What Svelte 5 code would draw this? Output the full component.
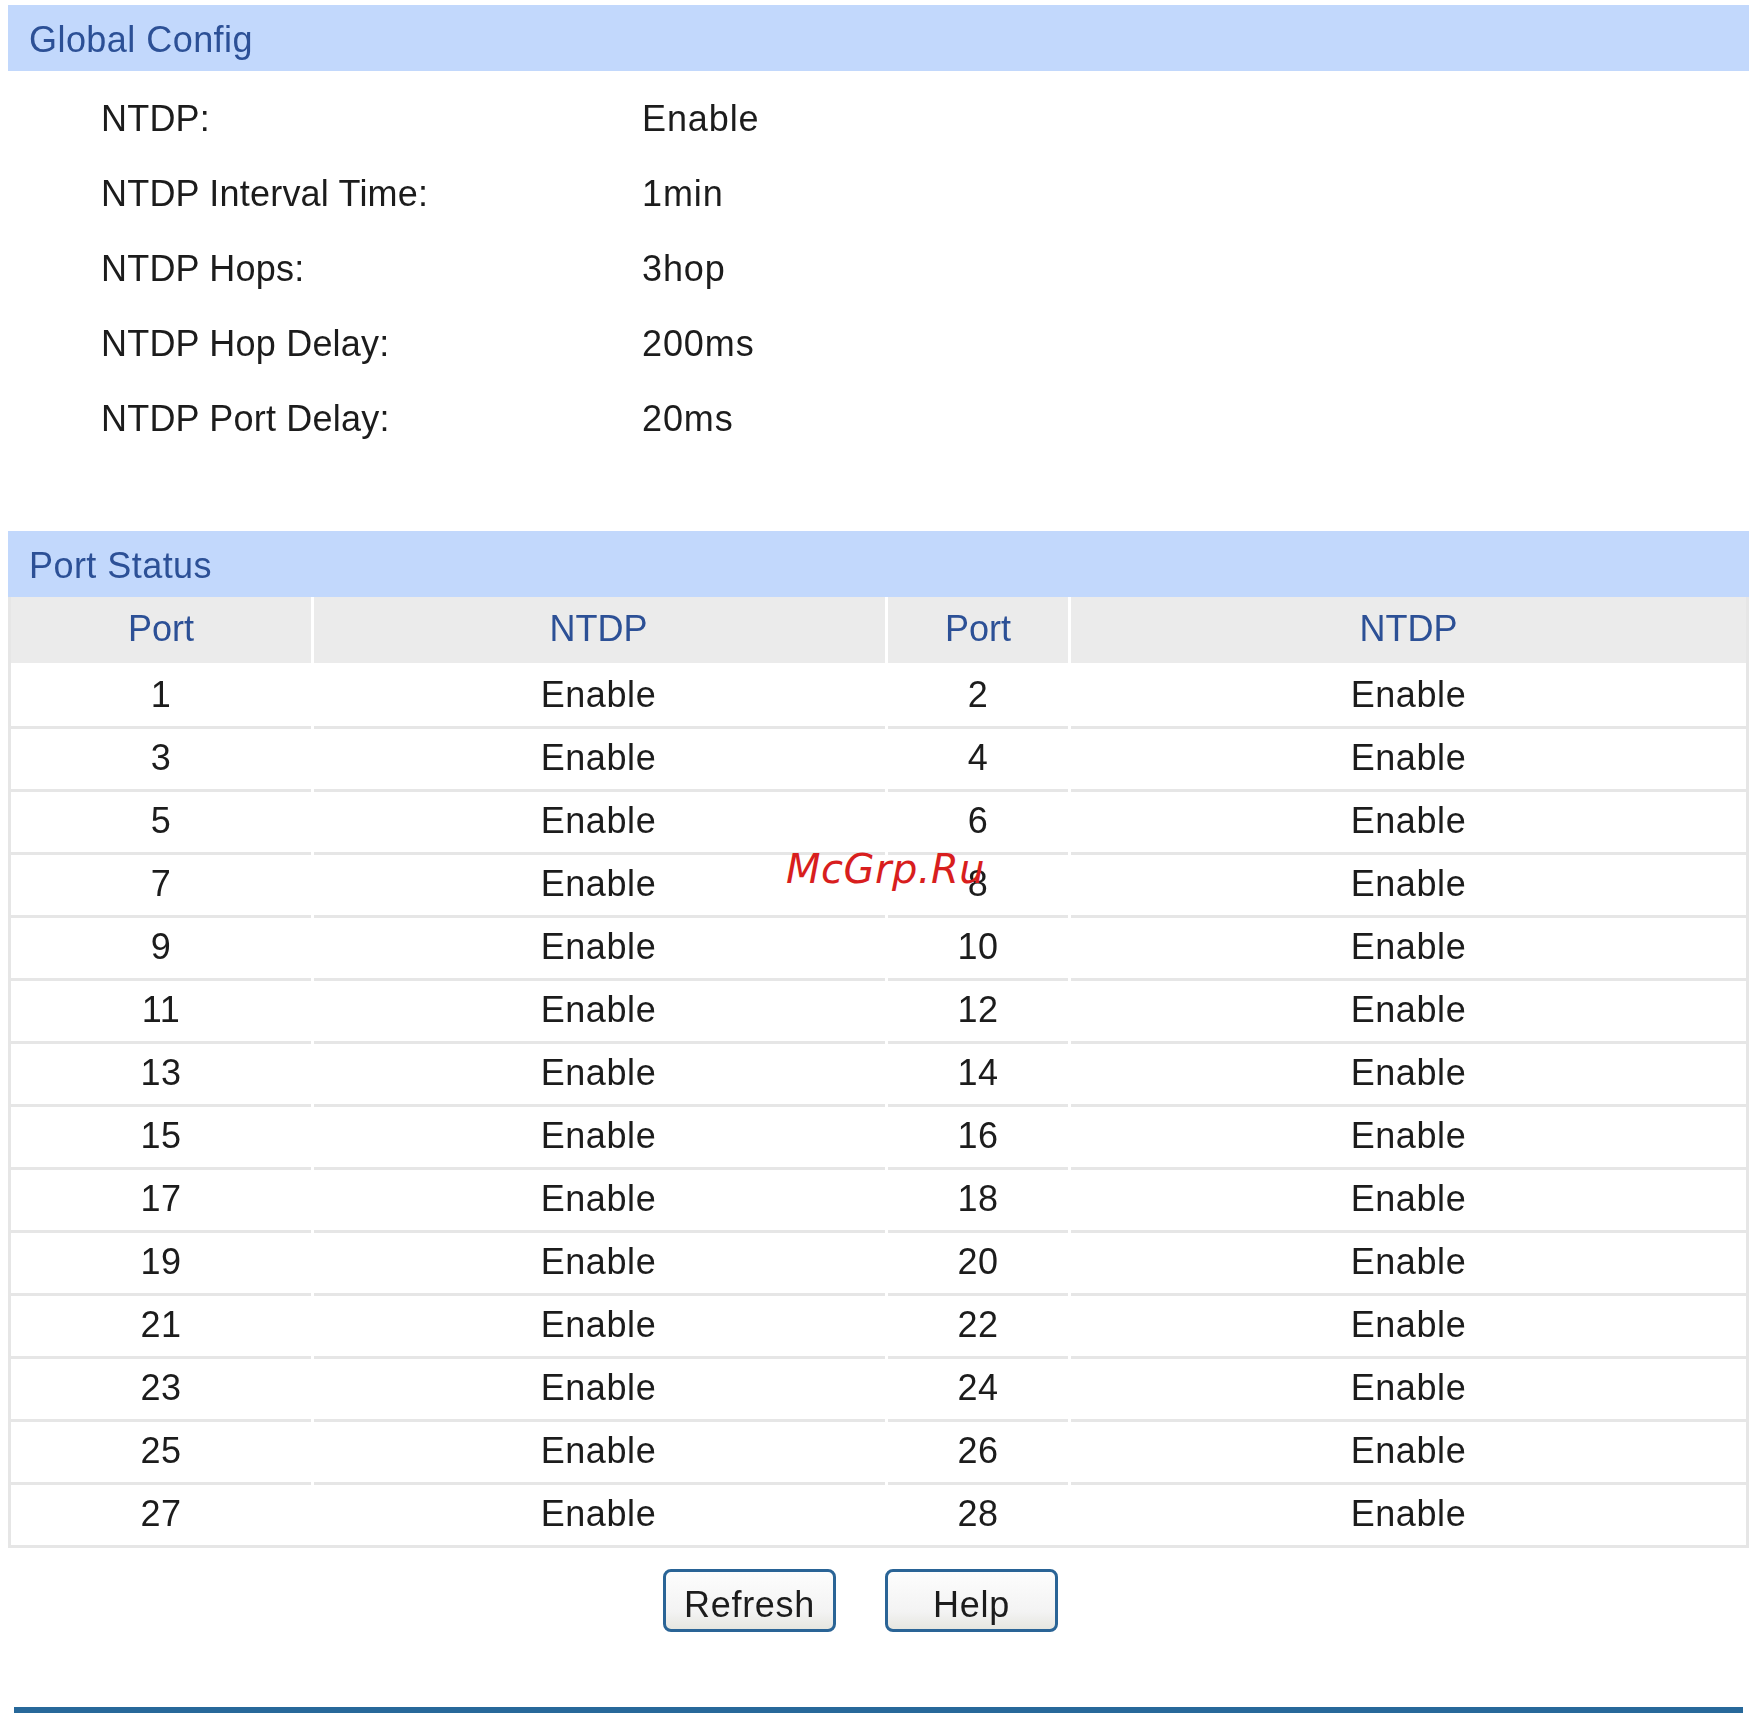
<script>
	const globalConfig = [
		['NTDP:', 'Enable'],
		['NTDP Interval Time:', '1min'],
		['NTDP Hops:', '3hop'],
		['NTDP Hop Delay:', '200ms'],
		['NTDP Port Delay:', '20ms']
	];

	// ports are listed in pairs, odd on the left and even on the right
	const portRows = [];
	for (let i = 1; i <= 28; i += 2) portRows.push([i, i + 1]);
</script>

<div class="page">
	<div class="content">
		<div class="title">Global Config</div>
		<div class="config">
			{#each globalConfig as [label, value]}
				<div class="config-row">
					<span class="label">{label}</span>
					<span class="value">{value}</span>
				</div>
			{/each}
		</div>

		<div class="title">Port Status</div>
		<div class="table">
			<div class="row head">
				<div class="cell">Port</div>
				<div class="cell">NTDP</div>
				<div class="cell">Port</div>
				<div class="cell">NTDP</div>
			</div>
			{#each portRows as [odd, even]}
				<div class="row">
					<div class="cell">{odd}</div>
					<div class="cell">Enable</div>
					<div class="cell">{even}</div>
					<div class="cell">Enable</div>
				</div>
			{/each}
		</div>

		<div class="buttons">
			<button>Refresh</button>
			<button>Help</button>
		</div>
		<div class="rule"></div>
	</div>
	<div class="watermark">McGrp.Ru</div>
</div>

<style>
	:global(body) {
		background: #fff;
	}

	.page {
		position: relative;
		width: 1756px;
		height: 1735px;
		overflow: hidden;
		font-family: "Liberation Sans", Arial, sans-serif;
		font-size: 36px;
		color: #1c1c1c;
	}

	.content {
		padding: 5px 7px 0 8px;
		filter: blur(0.6px);
	}

	.title {
		box-sizing: border-box;
		height: 66px;
		line-height: 66px;
		padding: 2px 0 0 21px;
		background: #c2d8fc;
		color: #2c5096;
		letter-spacing: 0.45px;
	}

	.config {
		padding: 10px 0 75px;
	}

	.config-row {
		display: grid;
		grid-template-columns: 541px 1fr;
		height: 75px;
		line-height: 75px;
		padding-left: 93px;
	}

	.label {
		letter-spacing: 0.2px;
	}

	.value {
		letter-spacing: 0.9px;
	}

	.table {
		border: solid #e6e6e6;
		border-width: 0 3px 3px;
		letter-spacing: 0.6px;
	}

	.row {
		display: grid;
		grid-template-columns: 300px 571px 180px 1fr;
		gap: 3px;
	}

	.cell {
		box-sizing: border-box;
		height: 63px;
		padding-bottom: 2px;
		border-bottom: 3px solid #e6e6e6;
		display: flex;
		align-items: center;
		justify-content: center;
	}

	.cell:nth-child(2) {
		padding-right: 2px;
	}

	.row:nth-child(2) .cell {
		height: 66px;
		padding-top: 3px;
	}

	.row:last-child .cell {
		height: 60px;
		border-bottom: none;
	}

	.head .cell {
		height: 66px;
		padding-bottom: 2px;
		border-bottom: none;
		background: #ebebeb;
		color: #2c5096;
		letter-spacing: 0;
	}

	.buttons {
		display: flex;
		gap: 49px;
		margin: 21px 0 0 655px;
	}

	button {
		width: 173px;
		height: 63px;
		padding: 8px 0 0;
		border: 3px solid #2a6496;
		border-radius: 8px;
		background: linear-gradient(#fdfdfd, #f3f3f3 70%, #e6e6e0);
		font: inherit;
		letter-spacing: 0.7px;
		color: #1c1c1c;
	}

	.rule {
		height: 6px;
		margin: 75px 6px 0 5.5px;
		background: #27689a;
	}

	.watermark {
		position: absolute;
		left: 786px;
		top: 845px;
		font-family: "DejaVu Sans", sans-serif;
		font-style: italic;
		font-size: 40px;
		line-height: 48px;
		letter-spacing: 0.5px;
		color: #d81e1e;
	}
</style>
